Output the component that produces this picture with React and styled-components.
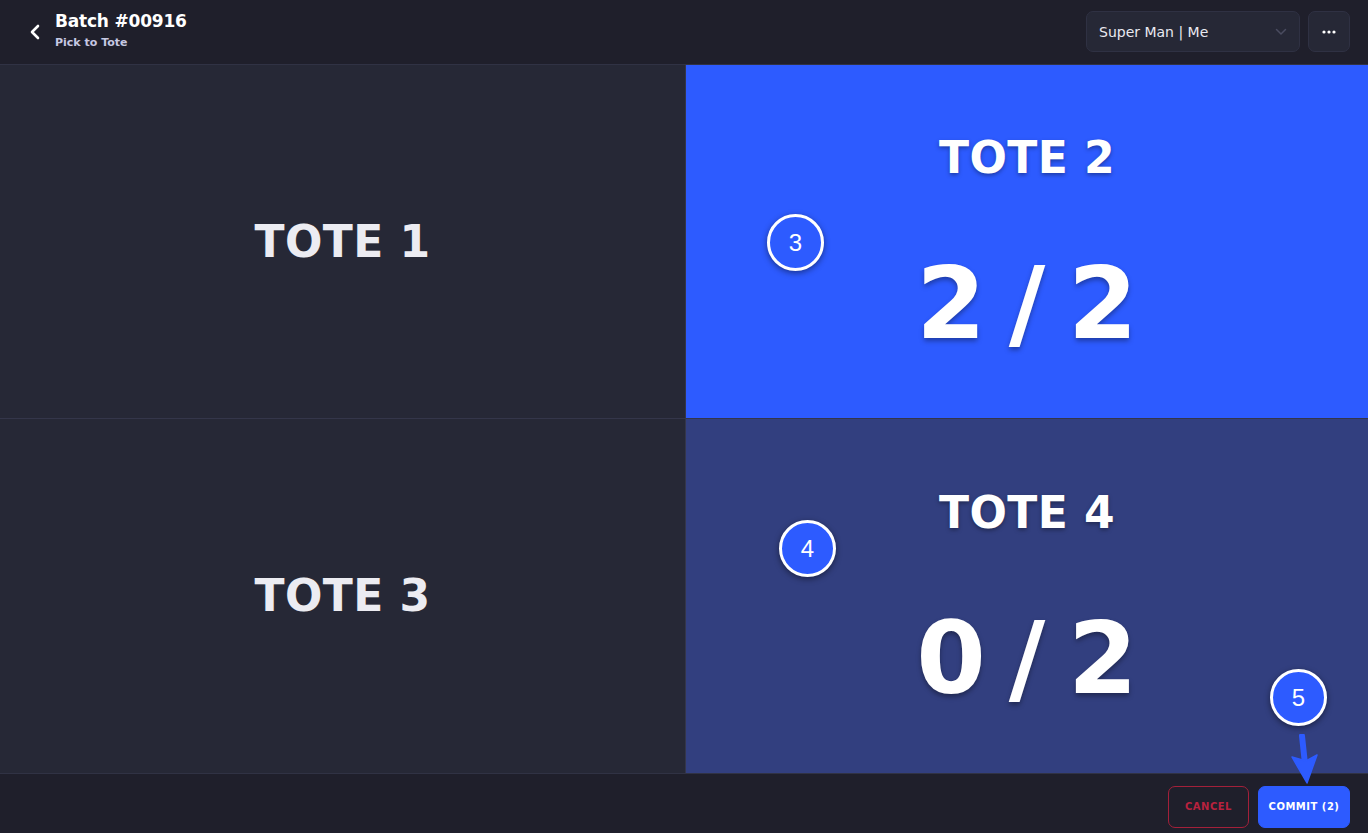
import React from 'react'
import styled, { createGlobalStyle } from 'styled-components'

const GlobalStyle = createGlobalStyle`
  html, body {
    margin: 0;
    padding: 0;
    background: #1f1f2b;
  }
  * { box-sizing: border-box; }
`

const Page = styled.div`
  position: relative;
  width: 1368px;
  height: 833px;
  display: flex;
  flex-direction: column;
  background: #1f1f2b;
  font-family: 'DejaVu Sans', 'Open Sans', sans-serif;
  color: #fff;
  overflow: hidden;
`

const Header = styled.header`
  height: 65px;
  flex-shrink: 0;
  display: flex;
  align-items: center;
  padding: 0 18px 0 24px;
  border-bottom: 1px solid #303244;
`

const BackBtn = styled.div`
  width: 22px;
  height: 22px;
  display: flex;
  align-items: center;
  justify-content: center;
  margin-right: 9px;
`

const TitleBlock = styled.div`
  display: flex;
  flex-direction: column;
  margin-top: -4px;
`

const BatchTitle = styled.div`
  font-size: 17px;
  font-weight: 700;
  line-height: 22px;
  letter-spacing: -0.2px;
`

const SubTitle = styled.div`
  font-size: 11px;
  font-weight: 700;
  color: #c6c8e2;
  line-height: 14px;
  margin-top: 4px;
`

const Spacer = styled.div`
  flex: 1;
`

const Select = styled.div`
  width: 214px;
  height: 41px;
  border-radius: 7px;
  background: #262836;
  border: 1px solid #2f3143;
  display: flex;
  align-items: center;
  padding: 0 12px;
  font-size: 14px;
  font-weight: 500;
  color: #e9e9f0;
  margin-top: -1px;
`

const SelectText = styled.span`
  flex: 1;
`

const MoreBtn = styled(Select)`
  width: 42px;
  padding: 0;
  justify-content: center;
  margin-left: 8px;
`

const Grid = styled.main`
  flex: 1;
  display: grid;
  grid-template-columns: 685px 1fr;
  grid-template-rows: 353px 1fr;
  gap: 1px;
  background: #34364a;
`

const Cell = styled.div`
  display: flex;
  flex-direction: column;
  align-items: center;
  justify-content: center;
  padding-top: ${p => (p.$count ? '9px' : '0')};
  background: ${p =>
    p.$state === 'done' ? '#2d5bff' : p.$state === 'active' ? '#323f7f' : '#262836'};
`

const ToteName = styled.div`
  font-size: 44px;
  font-weight: 700;
  letter-spacing: 0.4px;
  color: ${p => (p.$lit ? '#ffffff' : '#ececf2')};
  text-shadow: ${p => (p.$lit ? '0 2px 4px rgba(0,0,0,0.35)' : 'none')};
  line-height: 50px;
`

const Count = styled.div`
  font-size: 100px;
  font-weight: 700;
  line-height: 110px;
  margin-top: 66px;
  text-shadow: 0 3px 5px rgba(0, 0, 0, 0.35);
  word-spacing: -12px;
  white-space: pre;
`

const Footer = styled.footer`
  height: 60px;
  flex-shrink: 0;
  display: flex;
  align-items: center;
  justify-content: flex-end;
  gap: 9px;
  padding: 6px 18px 0 0;
  border-top: 1px solid #303244;
`

const FooterBtn = styled.button`
  height: 42px;
  border-radius: 7px;
  font-family: inherit;
  font-size: 10px;
  font-weight: 700;
  letter-spacing: 0.5px;
  padding: 0;
  white-space: nowrap;
  cursor: pointer;
  border: 1px solid ${p => (p.$primary ? '#2d5bff' : '#a3203a')};
  background: ${p => (p.$primary ? '#2d5bff' : 'transparent')};
  color: ${p => (p.$primary ? '#ffffff' : '#b8223e')};
  width: ${p => p.$w}px;
`

const Marker = styled.div`
  position: absolute;
  left: ${p => p.$x}px;
  top: ${p => p.$y}px;
  width: 57px;
  height: 57px;
  border-radius: 50%;
  border: 3px solid #fff;
  background: #2d5bff;
  box-shadow: 0 2px 6px rgba(0, 0, 0, 0.45);
  display: flex;
  align-items: center;
  justify-content: center;
  font-family: 'Liberation Sans', Arial, sans-serif;
  font-size: 24px;
  color: #fff;
`

const Arrow = styled.svg`
  position: absolute;
  left: 1288px;
  top: 734px;
`

const totes = [
  { name: 'TOTE 1' },
  { name: 'TOTE 2', state: 'done', count: '2 / 2' },
  { name: 'TOTE 3' },
  { name: 'TOTE 4', state: 'active', count: '0 / 2' },
]

export default function App() {
  return (
    <Page>
      <GlobalStyle />
      <Header>
        <BackBtn>
          <svg width="12" height="16" viewBox="0 0 12 16">
            <path d="M9 2 L3 8 L9 14" fill="none" stroke="#fff" strokeWidth="2.6" strokeLinecap="round" strokeLinejoin="round" />
          </svg>
        </BackBtn>
        <TitleBlock>
          <BatchTitle>Batch #00916</BatchTitle>
          <SubTitle>Pick to Tote</SubTitle>
        </TitleBlock>
        <Spacer />
        <Select>
          <SelectText>Super Man | Me</SelectText>
          <svg width="12" height="8" viewBox="0 0 12 8">
            <path d="M1.5 1.5 L6 6 L10.5 1.5" fill="none" stroke="#4a4c60" strokeWidth="1.5" strokeLinecap="round" />
          </svg>
        </Select>
        <MoreBtn>
          <svg width="14" height="4" viewBox="0 0 14 4">
            <circle cx="2" cy="2" r="1.6" fill="#fff" />
            <circle cx="7" cy="2" r="1.6" fill="#fff" />
            <circle cx="12" cy="2" r="1.6" fill="#fff" />
          </svg>
        </MoreBtn>
      </Header>
      <Grid>
        {totes.map(t => (
          <Cell key={t.name} $state={t.state} $count={!!t.count}>
            <ToteName $lit={!!t.state}>{t.name}</ToteName>
            {t.count && <Count>{t.count}</Count>}
          </Cell>
        ))}
      </Grid>
      <Footer>
        <FooterBtn $w={81}>CANCEL</FooterBtn>
        <FooterBtn $primary $w={92}>COMMIT (2)</FooterBtn>
      </Footer>
      <Marker $x={767} $y={214}>3</Marker>
      <Marker $x={779} $y={520}>4</Marker>
      <Marker $x={1270} $y={669}>5</Marker>
      <Arrow width="34" height="52" viewBox="0 0 34 52">
        <path d="M14 2 L17 30" stroke="#2d5bff" strokeWidth="6" strokeLinecap="round" />
        <path d="M4 23 L19 49 L29 21 L18 27 Z" fill="#2d5bff" strokeLinejoin="round" stroke="#2d5bff" strokeWidth="1.5" />
      </Arrow>
    </Page>
  )
}
